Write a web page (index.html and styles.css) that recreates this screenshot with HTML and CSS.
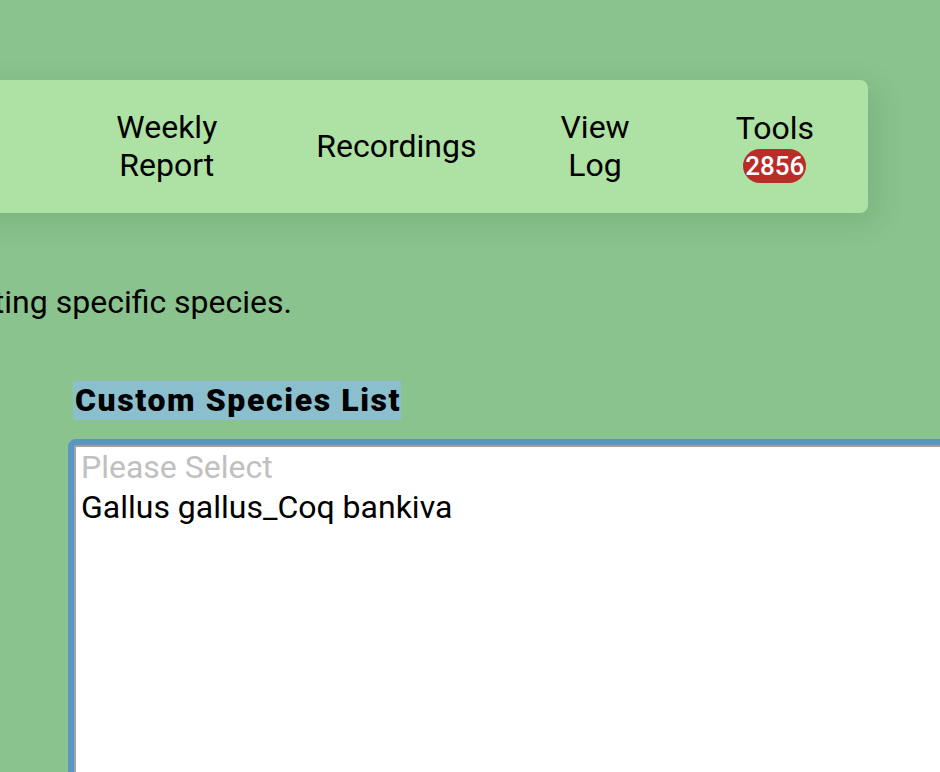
FILE: index.html
```html
<!DOCTYPE html>
<html>
<head>
<meta charset="utf-8">
<link rel="stylesheet" href="styles.css">
</head>
<body>
<nav class="topnav">
  <a class="nav-item nav-weekly">Weekly<br>Report</a>
  <a class="nav-item nav-recordings">Recordings</a>
  <a class="nav-item nav-log">View<br>Log</a>
  <a class="nav-item nav-tools">Tools<span class="badge">2856</span></a>
</nav>
<div class="intro">
  <p class="intro-text">Use this page to build a custom list of species, limiting detections to only the listed ones, when targeting specific species.</p>
</div>
<div class="form">
  <label class="field-label">Custom Species List</label>
  <div class="species-list">
    <div class="option placeholder">Please Select</div>
    <div class="option">Gallus gallus_Coq bankiva</div>
  </div>
</div>
</body>
</html>
```
FILE: styles.css
```css
html, body {
  margin: 0;
  padding: 0;
  background: #8ac38d;
  overflow: hidden;
}
body {
  font-family: Roboto, "Liberation Sans", sans-serif;
  font-size: 32px;
  line-height: 37.5px;
  color: #000;
  padding-top: 80px;
  height: 692px;
}
.topnav {
  display: flex;
  justify-content: flex-end;
  align-items: center;
  box-sizing: border-box;
  margin-left: -300px;
  width: 1168px;
  height: 133px;
  padding-right: 54px;
  background: #aee1a4;
  border-radius: 8px;
  box-shadow: 8px 8px 32px rgba(0, 60, 0, 0.12);
}
.nav-item {
  display: flex;
  flex-direction: column;
  align-items: center;
  text-align: center;
  color: #000;
}
.nav-recordings { margin-left: 99px; }
.nav-log { margin-left: 84px; }
.nav-tools { margin-left: 106px; margin-top: 0; }
.badge {
  display: block;
  background: #b82d27;
  color: #fff;
  font-size: 26px;
  font-weight: 500;
  line-height: 34px;
  height: 34px;
  padding: 0 2px;
  border-radius: 17px;
  margin-top: 2px;
}
.intro {
  display: flex;
  justify-content: flex-end;
  width: 292px;
  margin-top: 71px;
}
.intro-text {
  margin: 0;
  white-space: nowrap;
  flex: none;
}
.form {
  margin-top: 59px;
}
.field-label {
  display: inline-block;
  margin-left: 73px;
  padding: 0 0 0 2px;
  height: 39px;
  line-height: 39px;
  font-weight: 900;
  letter-spacing: 1.6px;
  background: #8cbfce;
}
.species-list {
  box-sizing: border-box;
  margin-top: 25px;
  margin-left: 74px;
  width: 900px;
  height: 400px;
  background: #fff;
  border: 2px solid #a0a0a0;
  border-radius: 2px;
  outline: 6px solid #5b95c1;
  padding: 0 5px;
}
.option {
  line-height: 40px;
  white-space: nowrap;
}
.placeholder {
  color: #c0c0c0;
}
```
